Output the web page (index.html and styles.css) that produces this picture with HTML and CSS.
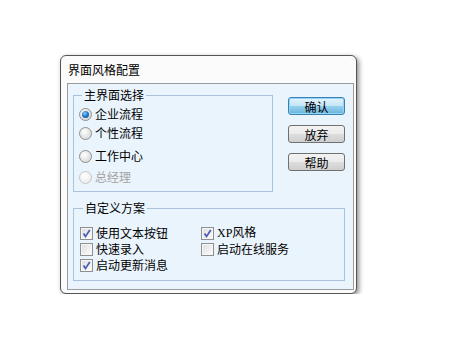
FILE: index.html
```html
<!DOCTYPE html>
<html lang="zh-CN">
<head>
<meta charset="utf-8">
<title>界面风格配置</title>
<link rel="stylesheet" href="styles.css">
</head>
<body>
<div class="window">
  <div class="title">界面风格配置</div>
  <div class="panel">
    <div class="top">
      <fieldset class="group g1">
        <legend>主界面选择</legend>
        <div class="opts">
          <div class="opt r1"><span class="radio checked"></span><span>企业流程</span></div>
          <div class="opt r2"><span class="radio"></span><span>个性流程</span></div>
          <div class="opt r3"><span class="radio"></span><span>工作中心</span></div>
          <div class="opt r4 disabled"><span class="radio"></span><span>总经理</span></div>
        </div>
      </fieldset>
      <div class="buttons">
        <button class="btn default">确认</button>
        <button class="btn">放弃</button>
        <button class="btn">帮助</button>
      </div>
    </div>
    <fieldset class="group g2">
      <legend>自定义方案</legend>
      <div class="checks">
        <div class="chk"><span class="box checked"><svg viewBox="0 0 11 11" width="11" height="11"><path d="M2.5 5.5 L4.5 8.5 L8.8 2" fill="none" stroke="#4a5cb5" stroke-width="1.7"/></svg></span><span>使用文本按钮</span></div>
        <div class="chk"><span class="box checked"><svg viewBox="0 0 11 11" width="11" height="11"><path d="M2.5 5.5 L4.5 8.5 L8.8 2" fill="none" stroke="#4a5cb5" stroke-width="1.7"/></svg></span><span class="simsun">XP风格</span></div>
        <div class="chk"><span class="box"></span><span>快速录入</span></div>
        <div class="chk"><span class="box"></span><span>启动在线服务</span></div>
        <div class="chk"><span class="box checked"><svg viewBox="0 0 11 11" width="11" height="11"><path d="M2.5 5.5 L4.5 8.5 L8.8 2" fill="none" stroke="#4a5cb5" stroke-width="1.7"/></svg></span><span>启动更新消息</span></div>
      </div>
    </fieldset>
  </div>
</div>
</body>
</html>
```

FILE: styles.css
```css
* { box-sizing: border-box; }
body {
  margin: 0;
  background: #ffffff;
  font-family: "Noto Sans CJK SC", "Noto Sans", sans-serif;
  font-size: 12px;
  color: #000;
}
.window {
  margin: 55px 0 0 60px;
  width: 297px;
  height: 239px;
  border: 1px solid #555;
  border-radius: 6px;
  background: #fbfbfb;
  box-shadow: 2px 2px 5px rgba(0,0,0,0.45);
  padding: 0 0 0 6px;
}
.title {
  height: 27px;
  line-height: 27px;
  padding-left: 1px;
  font-size: 12px;
}
.panel {
  width: 287px;
  height: 207px;
  border: 1px solid #9c9c9c;
  background: #eaf4fd;
  padding: 4px 0 0 5px;
}
.top {
  display: flex;
  align-items: flex-start;
}
.group {
  margin: 0;
  padding: 0;
  border: 1px solid #a9c3dd;
  min-width: 0;
}
.group legend {
  margin-left: 8px;
  padding: 0 2px;
  line-height: 14px;
  font-size: 12px;
}
.g2 legend { margin-left: 9px; }
.g1 {
  width: 200px;
  height: 104px;
}
.opts {
  padding: 2px 0 0 5px;
}
.opt {
  display: flex;
  align-items: center;
  gap: 3px;
  height: 20px;
  line-height: 20px;
}
.r2 { margin-top: -1px; }
.r3 { margin-top: 3px; }
.r4 { margin-top: 1px; }
.opt.disabled { color: #a3a3a3; }
.radio {
  width: 13px;
  height: 13px;
  border-radius: 50%;
  border: 1px solid #8e8f8f;
  background: radial-gradient(circle at 40% 35%, #ffffff 0%, #e9e9e9 45%, #cfcfcf 100%);
  flex: none;
  position: relative;
}
.radio.checked::after {
  content: "";
  position: absolute;
  left: 2px;
  top: 2px;
  width: 7px;
  height: 7px;
  border-radius: 50%;
  background: radial-gradient(circle at 40% 35%, #8fd2ff 0%, #1f7fd0 45%, #0b3f78 100%);
}
.disabled .radio {
  border-color: #c6c6c6;
  background: radial-gradient(circle at 40% 35%, #ffffff 0%, #f1f1f1 60%, #e4e4e4 100%);
}
.buttons {
  display: flex;
  flex-direction: column;
  gap: 10px;
  margin: 9px 0 0 15px;
}
.btn {
  width: 57px;
  height: 18px;
  padding: 0;
  border: 1px solid #707070;
  border-radius: 3px;
  background: linear-gradient(#f2f2f2 0%, #ebebeb 50%, #dddddd 51%, #cfcfcf 100%);
  font-family: "Noto Sans CJK SC", sans-serif;
  font-size: 12px;
  line-height: 15px;
  color: #000;
}
.btn.default {
  border-color: #3c7fb1;
  background: linear-gradient(#e5f4fc 0%, #c4e5f6 50%, #98d1ef 51%, #68b3db 100%);
  box-shadow: inset 0 0 0 1px #8fd6f8;
}
.g2 {
  width: 272px;
  height: 80px;
  margin-top: 9px;
}
.checks {
  display: grid;
  grid-template-columns: 121px 1fr;
  grid-auto-rows: 16px;
  padding: 10px 0 0 6px;
}
.chk {
  display: flex;
  align-items: center;
  gap: 3px;
  height: 16px;
  line-height: 16px;
}
.box {
  width: 13px;
  height: 13px;
  border: 1px solid #8e8f8f;
  background: linear-gradient(135deg, #dcdcdc 0%, #f4f4f4 70%, #ffffff 100%);
  box-shadow: inset 0 0 0 1px #f6f6f6;
  flex: none;
  display: flex;
  align-items: center;
  justify-content: center;
}
.simsun {
  font-family: "Liberation Serif", "Noto Sans CJK SC", serif;
}
```
